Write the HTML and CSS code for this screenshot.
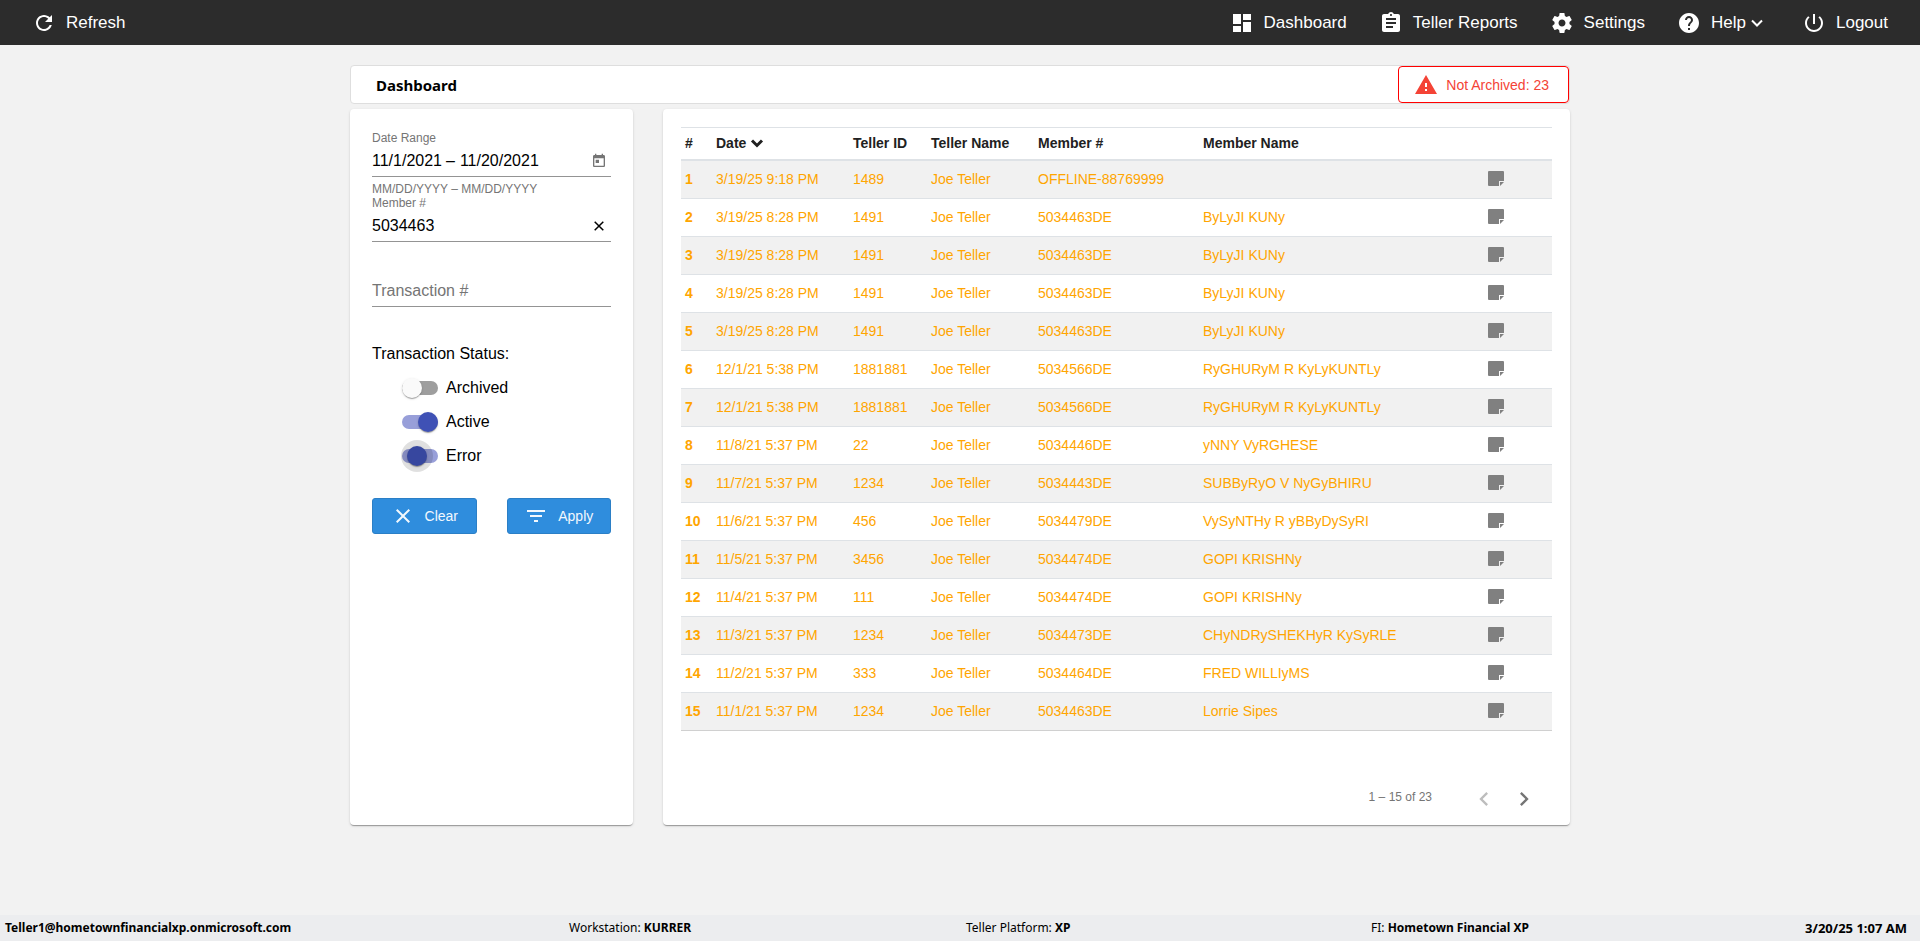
FILE: index.html
```html
<!DOCTYPE html>
<html lang="en">
<head>
<meta charset="utf-8">
<title>Dashboard</title>
<link rel="stylesheet" href="styles.css">
</head>
<body>
<svg class="sprite" aria-hidden="true">
  <symbol id="i-note" viewBox="0 0 16 16"><path d="M1 0h14a1 1 0 0 1 1 1v9h-5v5H1a1 1 0 0 1-1-1V1a1 1 0 0 1 1-1z"/><path d="M12 11h4l-4 4z"/></symbol>
  <symbol id="i-chevron" viewBox="0 0 14 14"><path d="M2 4.5l5 5 5-5"/></symbol>
</svg>

<header class="topbar">
  <a class="nav-item" href="#"><svg class="icon" viewBox="0 0 24 24"><path d="M17.65 6.35C16.2 4.9 14.21 4 12 4c-4.42 0-7.99 3.58-7.99 8s3.57 8 7.99 8c3.73 0 6.84-2.55 7.73-6h-2.08c-.82 2.33-3.04 4-5.65 4-3.31 0-6-2.69-6-6s2.69-6 6-6c1.66 0 3.14.69 4.22 1.78L13 11h7V4l-2.350 2.350z"/></svg><span>Refresh</span></a>
  <nav class="nav">
    <a class="nav-item" href="#"><svg class="icon" viewBox="0 0 24 24"><path d="M3 13h8V3H3v10zm0 8h8v-6H3v6zm10 0h8V11h-8v10zm0-18v6h8V3h-8z"/></svg><span>Dashboard</span></a>
    <a class="nav-item" href="#"><svg class="icon" viewBox="0 0 24 24"><path d="M19 3h-4.180C14.4 1.840 13.300 1 12 1c-1.300 0-2.400.840-2.820 2H5c-1.100 0-2 .9-2 2v14c0 1.100.9 2 2 2h14c1.100 0 2-.9 2-2V5c0-1.100-.9-2-2-2zm-7 0c.55 0 1 .45 1 1s-.45 1-1 1-1-.45-1-1 .45-1 1-1zm2 14H7v-2h7v2zm3-4H7v-2h10v2zm0-4H7V7h10v2z"/></svg><span>Teller Reports</span></a>
    <a class="nav-item" href="#"><svg class="icon" viewBox="0 0 24 24"><path d="M19.430 12.980c.04-.32.07-.64.07-.98s-.03-.66-.07-.98l2.110-1.650c.19-.15.24-.42.12-.64l-2-3.460c-.12-.22-.39-.3-.61-.22l-2.490 1c-.52-.4-1.080-.73-1.690-.98l-.38-2.650C14.460 2.180 14.250 2 14 2h-4c-.25 0-.46.18-.49.42l-.38 2.650c-.61.25-1.170.59-1.690.98l-2.490-1c-.23-.09-.49 0-.61.22l-2 3.460c-.13.22-.07.49.12.64l2.110 1.650c-.04.32-.07.65-.07.98s.03.66.07.98l-2.110 1.650c-.19.15-.24.42-.12.64l2 3.460c.12.22.39.3.61.22l2.490-1c.52.4 1.080.73 1.690.98l.38 2.650c.03.24.24.42.49.42h4c.25 0 .46-.18.49-.42l.38-2.650c.61-.25 1.170-.59 1.690-.98l2.490 1c.23.09.49 0 .61-.22l2-3.460c.12-.22.07-.49-.12-.64l-2.110-1.650zM12 15.500c-1.930 0-3.500-1.570-3.500-3.500s1.570-3.500 3.500-3.500 3.500 1.570 3.500 3.500-1.570 3.500-3.500 3.500z"/></svg><span>Settings</span></a>
    <a class="nav-item" href="#"><svg class="icon" viewBox="0 0 24 24"><path d="M12 2C6.480 2 2 6.480 2 12s4.480 10 10 10 10-4.480 10-10S17.520 2 12 2zm1 17h-2v-2h2v2zm2.070-7.750l-.9.920C13.450 12.900 13 13.500 13 15h-2v-.5c0-1.100.45-2.100 1.170-2.830l1.240-1.260c.37-.36.59-.86.59-1.410 0-1.100-.9-2-2-2s-2 .9-2 2H8c0-2.210 1.790-4 4-4s4 1.790 4 4c0 .88-.36 1.680-.93 2.250z"/></svg><span class="with-chevron">Help<svg class="chevron"><use href="#i-chevron"/></svg></span></a>
    <a class="nav-item" href="#"><svg class="icon" viewBox="0 0 24 24"><path d="M13 3h-2v10h2V3zm4.830 2.170l-1.420 1.420C17.990 7.860 19 9.810 19 12c0 3.870-3.130 7-7 7s-7-3.130-7-7c0-2.190 1.010-4.140 2.580-5.420L6.170 5.170C4.230 6.820 3 9.260 3 12c0 4.970 4.030 9 9 9s9-4.030 9-9c0-2.740-1.230-5.180-3.170-6.830z"/></svg><span>Logout</span></a>
  </nav>
</header>

<main class="page">
  <div class="titlebar">
    <h1>Dashboard</h1>
    <button class="alert" type="button"><svg class="icon" viewBox="0 0 24 24"><path d="M1 21h22L12 2 1 21zm12-3h-2v-2h2v2zm0-4h-2v-4h2v4z"/></svg><span>Not Archived: 23</span></button>
  </div>

  <div class="columns">
    <form class="card filters">
      <div class="field">
        <label class="caption" for="start">Date Range</label>
        <div class="control">
          <input id="start" class="date-start" type="text" value="11/1/2021"><span>–</span><input class="date-end" type="text" aria-label="End date" value="11/20/2021">
          <button class="field-button" type="button" aria-label="Open calendar"><svg class="calendar" viewBox="0 0 24 24"><path d="M19 3h-1V1h-2v2H8V1H6v2H5c-1.110 0-1.990.9-1.990 2L3 19c0 1.100.89 2 2 2h14c1.100 0 2-.9 2-2V5c0-1.100-.9-2-2-2zm0 16H5V8h14v11zM7 10h5v5H7z"/></svg></button>
        </div>
        <p class="hint">MM/DD/YYYY – MM/DD/YYYY</p>
      </div>
      <div class="field">
        <label class="caption" for="member">Member #</label>
        <div class="control">
          <input id="member" type="text" value="5034463">
          <button class="field-button" type="button" aria-label="Clear member number"><svg class="clear" viewBox="0 0 10 10"><path d="M.7.700l8.600 8.600M9.300.7L.7 9.300"/></svg></button>
        </div>
      </div>
      <div class="field spaced">
        <div class="control"><input type="text" aria-label="Transaction #" placeholder="Transaction #"></div>
      </div>
      <fieldset class="status">
        <legend>Transaction Status:</legend>
        <label class="toggle"><input type="checkbox">Archived</label>
        <label class="toggle"><input type="checkbox" checked>Active</label>
        <label class="toggle"><input class="sliding" type="checkbox" checked>Error</label>
      </fieldset>
      <div class="actions">
        <button class="button" type="button"><svg class="icon" viewBox="0 0 24 24"><path d="M19 6.410L17.590 5 12 10.590 6.410 5 5 6.410 10.590 12 5 17.590 6.410 19 12 13.410 17.590 19 19 17.590 13.410 12z"/></svg>Clear</button>
        <button class="button" type="button"><svg class="icon" viewBox="0 0 24 24"><path d="M10 18h4v-2h-4v2zM3 6v2h18V6H3zm3 7h12v-2H6v2z"/></svg>Apply</button>
      </div>
    </form>

    <section class="card results">
      <table>
        <colgroup><col class="c-num"><col class="c-date"><col class="c-id"><col class="c-teller"><col class="c-member"><col><col class="c-note"></colgroup>
        <thead>
          <tr><th>#</th><th><span class="with-chevron">Date<svg class="chevron bold"><use href="#i-chevron"/></svg></span></th><th>Teller ID</th><th>Teller Name</th><th>Member #</th><th>Member Name</th><th></th></tr>
        </thead>
        <tbody>
          <tr><th>1</th><td>3/19/25 9:18 PM</td><td>1489</td><td>Joe Teller</td><td>OFFLINE-88769999</td><td></td><td><button class="note" type="button" aria-label="Note"><svg><use href="#i-note"/></svg></button></td></tr>
          <tr><th>2</th><td>3/19/25 8:28 PM</td><td>1491</td><td>Joe Teller</td><td>5034463DE</td><td>ByLyJI KUNy</td><td><button class="note" type="button" aria-label="Note"><svg><use href="#i-note"/></svg></button></td></tr>
          <tr><th>3</th><td>3/19/25 8:28 PM</td><td>1491</td><td>Joe Teller</td><td>5034463DE</td><td>ByLyJI KUNy</td><td><button class="note" type="button" aria-label="Note"><svg><use href="#i-note"/></svg></button></td></tr>
          <tr><th>4</th><td>3/19/25 8:28 PM</td><td>1491</td><td>Joe Teller</td><td>5034463DE</td><td>ByLyJI KUNy</td><td><button class="note" type="button" aria-label="Note"><svg><use href="#i-note"/></svg></button></td></tr>
          <tr><th>5</th><td>3/19/25 8:28 PM</td><td>1491</td><td>Joe Teller</td><td>5034463DE</td><td>ByLyJI KUNy</td><td><button class="note" type="button" aria-label="Note"><svg><use href="#i-note"/></svg></button></td></tr>
          <tr><th>6</th><td>12/1/21 5:38 PM</td><td>1881881</td><td>Joe Teller</td><td>5034566DE</td><td>RyGHURyM R KyLyKUNTLy</td><td><button class="note" type="button" aria-label="Note"><svg><use href="#i-note"/></svg></button></td></tr>
          <tr><th>7</th><td>12/1/21 5:38 PM</td><td>1881881</td><td>Joe Teller</td><td>5034566DE</td><td>RyGHURyM R KyLyKUNTLy</td><td><button class="note" type="button" aria-label="Note"><svg><use href="#i-note"/></svg></button></td></tr>
          <tr><th>8</th><td>11/8/21 5:37 PM</td><td>22</td><td>Joe Teller</td><td>5034446DE</td><td>yNNY VyRGHESE</td><td><button class="note" type="button" aria-label="Note"><svg><use href="#i-note"/></svg></button></td></tr>
          <tr><th>9</th><td>11/7/21 5:37 PM</td><td>1234</td><td>Joe Teller</td><td>5034443DE</td><td>SUBByRyO V NyGyBHIRU</td><td><button class="note" type="button" aria-label="Note"><svg><use href="#i-note"/></svg></button></td></tr>
          <tr><th>10</th><td>11/6/21 5:37 PM</td><td>456</td><td>Joe Teller</td><td>5034479DE</td><td>VySyNTHy R yBByDySyRI</td><td><button class="note" type="button" aria-label="Note"><svg><use href="#i-note"/></svg></button></td></tr>
          <tr><th>11</th><td>11/5/21 5:37 PM</td><td>3456</td><td>Joe Teller</td><td>5034474DE</td><td>GOPI KRISHNy</td><td><button class="note" type="button" aria-label="Note"><svg><use href="#i-note"/></svg></button></td></tr>
          <tr><th>12</th><td>11/4/21 5:37 PM</td><td>111</td><td>Joe Teller</td><td>5034474DE</td><td>GOPI KRISHNy</td><td><button class="note" type="button" aria-label="Note"><svg><use href="#i-note"/></svg></button></td></tr>
          <tr><th>13</th><td>11/3/21 5:37 PM</td><td>1234</td><td>Joe Teller</td><td>5034473DE</td><td>CHyNDRySHEKHyR KySyRLE</td><td><button class="note" type="button" aria-label="Note"><svg><use href="#i-note"/></svg></button></td></tr>
          <tr><th>14</th><td>11/2/21 5:37 PM</td><td>333</td><td>Joe Teller</td><td>5034464DE</td><td>FRED WILLIyMS</td><td><button class="note" type="button" aria-label="Note"><svg><use href="#i-note"/></svg></button></td></tr>
          <tr><th>15</th><td>11/1/21 5:37 PM</td><td>1234</td><td>Joe Teller</td><td>5034463DE</td><td>Lorrie Sipes</td><td><button class="note" type="button" aria-label="Note"><svg><use href="#i-note"/></svg></button></td></tr>
        </tbody>
      </table>
      <div class="paginator">
        <span class="range">1 – 15 of 23</span>
        <button class="pager" type="button" aria-label="Previous page" disabled><svg viewBox="0 0 24 24"><path d="M15.410 7.410L14 6l-6 6 6 6 1.410-1.410L10.830 12z"/></svg></button>
        <button class="pager" type="button" aria-label="Next page"><svg viewBox="0 0 24 24"><path d="M10 6L8.590 7.410 13.170 12l-4.580 4.590L10 18l6-6z"/></svg></button>
      </div>
    </section>
  </div>
</main>

<footer class="statusbar">
  <b>Teller1@hometownfinancialxp.onmicrosoft.com</b>
  <span>Workstation: <b>KURRER</b></span>
  <span>Teller Platform: <b>XP</b></span>
  <span>FI: <b>Hometown Financial XP</b></span>
  <b class="clock">3/20/25 1:07 AM</b>
</footer>
</body>
</html>
```

FILE: styles.css
```css
* { box-sizing: border-box; }

body {
  margin: 0;
  min-height: 100vh;
  display: flex;
  flex-direction: column;
  background: #f2f2f2;
  color: #000;
  font: 16px/20px "Liberation Sans", Arial, sans-serif;
}

button, input { font: inherit; color: inherit; }
button { border: 0; background: none; padding: 0; cursor: pointer; }

.sprite { display: none; }
.icon { width: 24px; height: 24px; fill: currentColor; flex: none; }

.chevron {
  width: 14px;
  height: 14px;
  fill: none;
  stroke: currentColor;
  stroke-width: 2;
}
.chevron.bold { stroke-width: 3; }
.with-chevron { display: inline-flex; align-items: center; gap: 4px; }

/* Top navigation */
.topbar {
  display: flex;
  justify-content: space-between;
  align-items: center;
  height: 45px;
  padding: 0 32px;
  background: #2c2c2c;
  color: #fff;
  font-size: 17px;
}
.nav { display: flex; gap: 32px; }
.nav-item {
  display: flex;
  align-items: center;
  gap: 10px;
  color: inherit;
  text-decoration: none;
}
.nav .nav-item:last-child { margin-left: 6px; }

/* Page */
.page {
  flex: 1;
  width: 100%;
  max-width: 1220px;
  margin: 0 auto;
  padding: 20px 0;
}
.titlebar {
  display: flex;
  align-items: center;
  justify-content: space-between;
  height: 39px;
  margin-bottom: 5px;
  padding-left: 25px;
  border: 1px solid #dedede;
  border-radius: 4px;
  background: #fff;
}
h1 {
  margin: 0;
  font: bold 15px/20px "Noto Sans", sans-serif;
}
.alert {
  display: flex;
  align-items: center;
  gap: 8px;
  height: 37px;
  padding: 0 19px 0 15px;
  border: 1px solid #f00;
  border-radius: 4px;
  background: #fff;
  color: #f44336;
  font-size: 14px;
}

.columns {
  display: grid;
  grid-template-columns: 283px 1fr;
  gap: 30px;
}
.card {
  border-radius: 4px;
  background: #fff;
  box-shadow: 0 2px 1px -1px rgba(0, 0, 0, .2), 0 1px 1px rgba(0, 0, 0, .14), 0 1px 3px rgba(0, 0, 0, .12);
}

/* Filters */
.filters { padding: 22px 22px 0; }
.caption, .hint {
  display: block;
  margin: 0;
  color: #757575;
  font-size: 12px;
  line-height: 14px;
}
.hint { padding-top: 5px; height: 19px; }
.control {
  display: flex;
  align-items: center;
  height: 32px;
  border-bottom: 1px solid #949494;
}
.control input {
  flex: 1;
  min-width: 0;
  padding: 0;
  border: 0;
  outline: 0;
  background: none;
}
.control input::placeholder { color: #757575; opacity: 1; }
.control .date-start { flex: 0 0 74px; }
.control .date-end { margin-left: 5px; }
.field-button {
  display: flex;
  justify-content: center;
  align-items: center;
  width: 24px;
  height: 24px;
  color: #757575;
}
.calendar { width: 16px; height: 16px; fill: currentColor; }
.clear { width: 10px; height: 10px; stroke: #000; stroke-width: 1.500; fill: none; }
.spaced { padding-top: 33px; }

.status {
  margin: 0;
  padding: 37px 0 0;
  border: 0;
}
.status legend { float: left; width: 100%; padding: 0; margin-bottom: 7px; }
.toggle {
  clear: both;
  display: flex;
  align-items: center;
  gap: 8px;
  height: 34px;
  padding-left: 30px;
}
.toggle input {
  appearance: none;
  position: relative;
  width: 36px;
  height: 14px;
  margin: 0;
  border-radius: 7px;
  background: #9e9e9e;
}
.toggle input::before {
  content: "";
  position: absolute;
  top: -3px;
  left: 0;
  width: 20px;
  height: 20px;
  border-radius: 50%;
  background: #fafafa;
  box-shadow: 0 2px 1px -1px rgba(0, 0, 0, .2), 0 1px 1px rgba(0, 0, 0, .14), 0 1px 3px rgba(0, 0, 0, .12);
}
.toggle input:checked { background: #989fd9; }
.toggle input:checked::before { left: 16px; background: #3f51b5; }
.toggle input.sliding::before { left: 5px; }
.toggle input.sliding::after {
  content: "";
  position: absolute;
  top: -9px;
  left: -1px;
  width: 32px;
  height: 32px;
  border-radius: 50%;
  background: rgba(0, 0, 0, .12);
}

.actions {
  display: grid;
  grid-template-columns: 1fr 1fr;
  gap: 30px;
  padding-top: 25px;
}
.button {
  display: flex;
  align-items: center;
  justify-content: center;
  gap: 10px;
  height: 36px;
  border: 1px solid #2b7fc6;
  border-radius: 3px;
  background: #2f8ddd;
  color: #f2f8fd;
  font-size: 14px;
}

/* Results */
.results {
  display: flex;
  flex-direction: column;
  padding: 18px 18px 0;
}
table {
  width: 100%;
  table-layout: fixed;
  border-collapse: separate;
  border-spacing: 0;
  border-top: 1px solid #dee2e6;
  font-size: 14px;
}
.c-num { width: 31px; }
.c-date { width: 137px; }
.c-id { width: 78px; }
.c-teller { width: 107px; }
.c-member { width: 165px; }
.c-note { width: 68px; }
th, td { padding: 0 4px; text-align: left; white-space: nowrap; }
thead th {
  height: 33px;
  padding-bottom: 1px;
  border-bottom: 2px solid #dee2e6;
  color: #212121;
}
tbody tr { color: #ffa500; }
tbody th, tbody td { height: 38px; padding-bottom: 2px; border-bottom: 1px solid #dee2e6; }
tbody tr:nth-child(odd) { background: #f1f1f1; }
tbody tr:last-child > * { border-bottom-color: #d0d0d0; }
.note { display: block; width: 16px; height: 16px; color: #808080; }
.note svg { display: block; width: 16px; height: 16px; fill: currentColor; }

.paginator {
  display: flex;
  align-items: center;
  justify-content: flex-end;
  height: 56px;
  margin-top: 38px;
  padding-right: 8px;
  color: #757575;
  font-size: 12px;
}
.range { margin-right: 32px; }
.pager { display: grid; place-items: center; width: 40px; height: 40px; padding-top: 4px; }
.pager svg { width: 28px; height: 28px; fill: currentColor; }
.pager:disabled { color: #bdbdbd; }

/* Status bar */
.statusbar {
  display: grid;
  grid-template-columns: 564fr 397fr 405fr 268fr 268fr;
  align-items: center;
  height: 26px;
  padding: 0 13px 0 5px;
  background: #ecedef;
  font: 12px/16px "Noto Sans", sans-serif;
  white-space: nowrap;
}
.clock { text-align: right; font-size: 13px; }
```
